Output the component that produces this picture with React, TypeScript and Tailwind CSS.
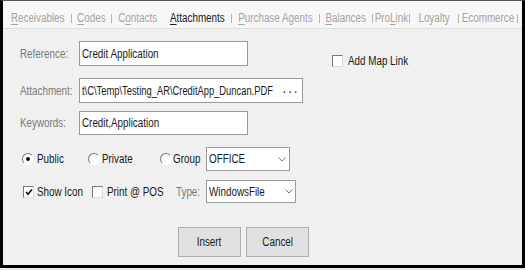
import React from 'react';

const TABS = [
  { w: 'w-[67px]', pre: '', u: 'R', post: 'eceivables' },
  { w: 'w-[39px]', pre: '', u: 'C', post: 'odes' },
  { w: 'w-[51px]', pre: 'C', u: 'o', post: 'ntacts', noSep: true },
  { w: 'w-[68px]', pre: '', u: 'A', post: 'ttachments', active: true },
  { w: 'w-[87px]', pre: '', u: 'P', post: 'urchase Agents' },
  { w: 'w-[52px]', pre: '', u: 'B', post: 'alances' },
  { w: 'w-[36px]', pre: 'Pro', u: 'L', post: 'ink' },
  { w: 'w-[48px]', pre: 'Loyalty', u: '', post: '' },
  { w: 'w-[58px]', pre: 'Ecommerce', u: '', post: '' },
];

// narrow face isn't installed, so squeeze Arial-metric text to Arial Narrow width
function N({ children, center, tight }: { children: React.ReactNode; center?: boolean; tight?: boolean }) {
  return (
    <span
      className={`inline-block shrink-0 whitespace-nowrap ${tight ? 'scale-x-[0.78]' : 'scale-x-[0.82]'} ${center ? 'origin-center' : 'origin-left'}`}
    >
      {children}
    </span>
  );
}

function Sep() {
  return <div className="mt-[3px] h-[9px] w-px shrink-0 bg-[#b4b4b4]" />;
}

function Radio({ on }: { on?: boolean }) {
  return (
    <div className="flex h-[12px] w-[12px] shrink-0 items-center justify-center rounded-full border-[1.5px] border-t-[#7a7a7a] border-l-[#7a7a7a] border-b-white border-r-white bg-white">
      {on && <div className="h-[4px] w-[4px] rounded-full bg-[#111]" />}
    </div>
  );
}

function Check({ on }: { on?: boolean }) {
  return (
    <div className="flex h-[12px] w-[11px] shrink-0 items-center justify-center border border-t-[#7a7a7a] border-l-[#7a7a7a] border-b-[#dcdcdc] border-r-[#dcdcdc] bg-white">
      {on && (
        <svg width="8" height="8" viewBox="0 0 8 8">
          <path d="M1 4 L3 6.2 L7 1.5" fill="none" stroke="#111" strokeWidth="1.6" />
        </svg>
      )}
    </div>
  );
}

function Chevron() {
  return (
    <svg width="8" height="5" viewBox="0 0 8 5" className="shrink-0">
      <path d="M0.5 0.5 L4 4 L7.5 0.5" fill="none" stroke="#777" strokeWidth="1" />
    </svg>
  );
}

export default function App() {
  return (
    <div className="h-[270px] w-[525px] bg-[#e9e9e9] font-['Liberation_Sans',Arial,sans-serif] text-[12px]">
      <div className="flex h-[268px] flex-col border-l-[3px] border-r-[3px] border-b-[3px] border-t border-black border-t-[#5a5a5a]">
        {/* tab strip */}
        <div className="flex h-[27px] items-start bg-[#f7f7f7] pl-px pt-[10px] leading-[14px]">
          {TABS.map((t, i) => (
            <React.Fragment key={i}>
              <div className={`${t.w} flex shrink-0 justify-center ${t.active ? 'text-[#1a1a1a]' : 'text-[#a3a3a3]'}`}>
                <N center>
                  {t.pre}
                  {t.u && <span className="underline underline-offset-2">{t.u}</span>}
                  {t.post}
                </N>
              </div>
              {!t.noSep && <Sep />}
            </React.Fragment>
          ))}
        </div>

        {/* panel */}
        <div className="flex-1 border-t border-[#dedede] bg-[#f0f0f0] pl-[17px] pt-[12px] text-[#1a1a1a]">
          <div className="flex items-start">
            <div className="flex h-[25px] w-[59px] shrink-0 items-center text-[#7a7a7a]"><N>Reference:</N></div>
            <div className="flex h-[25px] w-[169px] shrink-0 items-center border border-[#9a9a9a] bg-white pl-[2px]"><N>Credit Application</N></div>
            <div className="ml-[84px] mt-[11px] flex items-center gap-[5px]">
              <Check />
              <N>Add Map Link</N>
            </div>
          </div>

          <div className="mt-[8px] flex items-start">
            <div className="flex h-[25px] w-[59px] shrink-0 items-center text-[#7a7a7a]"><N>Attachment:</N></div>
            <div className="flex h-[25px] w-[224px] shrink-0 items-center overflow-hidden border border-[#9a9a9a] bg-white pl-[2px] pr-[3px]">
              <div className="min-w-0 flex-1">
                <N tight>t\C\Temp\Testing_AR\CreditApp_Duncan.PDF</N>
              </div>
              <span className="shrink-0 text-[14px] leading-none tracking-[1px] text-[#333]">···</span>
            </div>
          </div>

          <div className="mt-[8px] flex items-start">
            <div className="flex h-[24px] w-[59px] shrink-0 items-center text-[#7a7a7a]"><N>Keywords:</N></div>
            <div className="flex h-[24px] w-[169px] shrink-0 items-center border border-[#9a9a9a] bg-white pl-[2px]"><N>Credit,Application</N></div>
          </div>

          <div className="mt-[12px] flex h-[24px] items-center">
            <div className="flex w-[66px] shrink-0 items-center gap-[3px] pl-[2px]">
              <Radio on />
              <N>Public</N>
            </div>
            <div className="flex w-[72px] shrink-0 items-center gap-[2px] pl-[2px]">
              <Radio />
              <N>Private</N>
            </div>
            <div className="flex w-[48px] shrink-0 items-center gap-[1px] pl-[2px]">
              <Radio />
              <N>Group</N>
            </div>
            <div className="flex h-[24px] w-[84px] shrink-0 items-center border border-[#9a9a9a] bg-white pl-[2px] pr-[3px]">
              <div className="min-w-0 flex-1"><N>OFFICE</N></div>
              <Chevron />
            </div>
          </div>

          <div className="mt-[9px] flex h-[23px] items-center">
            <div className="flex w-[70px] shrink-0 items-center gap-[3px] pl-[3px]">
              <Check on />
              <N>Show Icon</N>
            </div>
            <div className="flex w-[80px] shrink-0 items-center gap-[4px] pl-[2px]">
              <Check />
              <N>Print @ POS</N>
            </div>
            <div className="w-[36px] shrink-0 pl-[6px] text-[#7a7a7a]"><N>Type:</N></div>
            <div className="flex h-[23px] w-[90px] shrink-0 items-center border border-[#9a9a9a] bg-white pl-[2px] pr-[2px]">
              <div className="min-w-0 flex-1"><N>WindowsFile</N></div>
              <Chevron />
            </div>
          </div>

          <div className="ml-[158px] mt-[24px] flex gap-[5px]">
            <button className="flex h-[30px] w-[63px] items-center justify-center border border-[#adadad] bg-[#e1e1e1] text-[#1a1a1a]"><N center>Insert</N></button>
            <button className="flex h-[30px] w-[63px] items-center justify-center border border-[#adadad] bg-[#e1e1e1] text-[#1a1a1a]"><N center>Cancel</N></button>
          </div>
        </div>
      </div>
    </div>
  );
}
